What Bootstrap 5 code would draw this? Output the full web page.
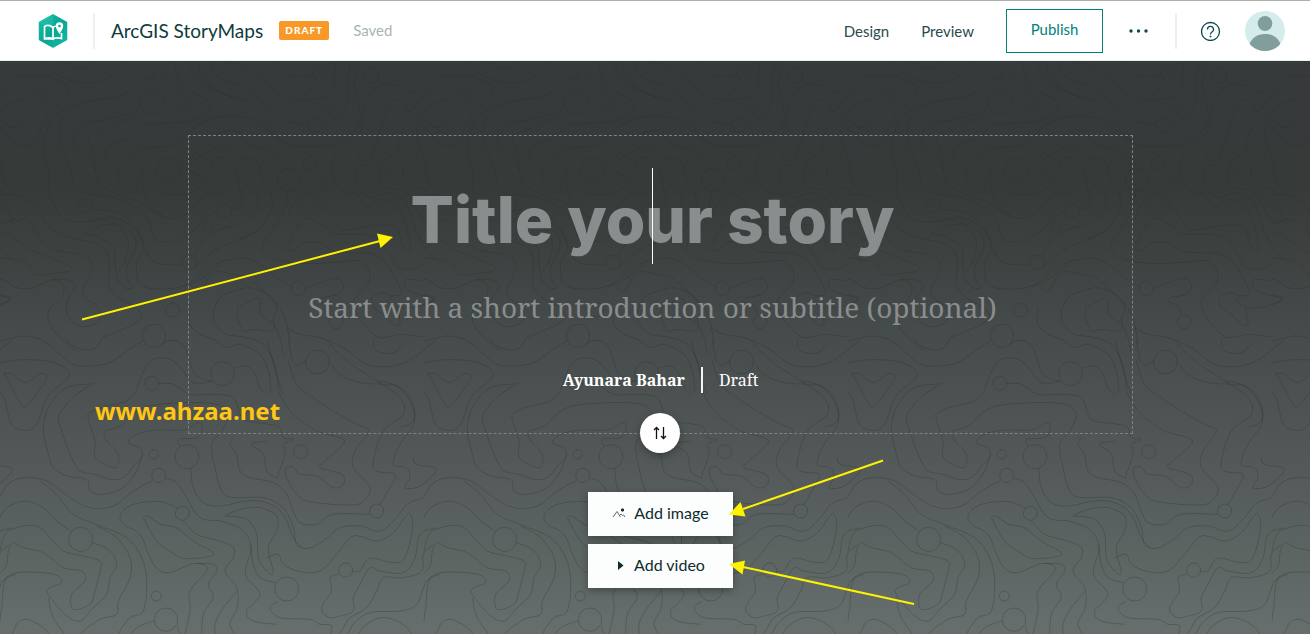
<!DOCTYPE html>
<html lang="en">
<head>
<meta charset="utf-8">
<meta name="viewport" content="width=device-width, initial-scale=1">
<title>ArcGIS StoryMaps</title>
<link href="https://cdn.jsdelivr.net/npm/bootstrap@5.3.0/dist/css/bootstrap.min.css" rel="stylesheet">
<style>
  body { font-family: Lato, "Open Sans", sans-serif; color: #0f3b3d; background: #666e6d; }
  .topbar { height: 61px; border-top: 1px solid #b0b0b0; border-bottom: 1px solid #e6f0ee; padding: 0 25px 0 37px; }
  .rule { width: 2px; height: 36px; background: #eaf1f0; }
  .brand { font-size: 19px; line-height: 24px; color: #0f3b3d; }
  .tag-draft { background: #f89927; color: #fff; font-size: 10px; line-height: 19px; font-weight: 900; letter-spacing: 1px; width: 50px; border-radius: 2px; }
  .saved { font-size: 15px; color: #a9b4b4; }
  .nav-text { font-size: 15px; color: #2b4a4c; text-decoration: none; padding-top: 2px; }
  .btn-publish { width: 97px; height: 44px; border: 1px solid #00827a; border-radius: 0; color: #00827a; font-size: 15px; padding: 0 0 2px; background: #fff; }
  .btn-plain { border: 0; padding: 0; background: none; line-height: 0; }
  .hero { min-height: calc(100vh - 61px); padding: 74px 0 46px 11px; background: linear-gradient(#363a3b 0%, #363a39 22%, #454a4a 46%, #545b5a 73%, #666f6d 100%); overflow: hidden; }
  .contours { inset: 0; width: 100%; height: 100%; }
  .notes { left: 0; top: 0; width: 100%; height: 100%; pointer-events: none; }
  .cover { width: 945px; max-width: 100%; border: 1px dashed #7d8382; padding: 32px 0 40px; }
  .field { background: none; border: 0; outline: 0; padding: 0; text-align: center; width: 100%; color: #fff; }
  .field::placeholder { color: #8a8d8d; opacity: 1; }
  .edit { padding-right: 16px; }
  .field-title { font-family: Inter, Lato, sans-serif; font-size: 64px; font-weight: 800; height: 96px; padding-top: 8px; }
  .caret { left: calc(50% - 9px); top: 0; width: 1px; height: 96px; background: #fff; }
  .field-sub { font-family: "Noto Serif", "DejaVu Serif", serif; font-size: 28px; height: 44px; margin-top: 21px; }
  .byline { font-family: "Noto Serif", "DejaVu Serif", serif; font-size: 16px; line-height: 26px; margin-top: 38px; color: #fff; gap: 16px; }
  .byline-rule { width: 2px; height: 26px; background: #f4f4f4; }
  .btn-swap { width: 40px; height: 40px; border-radius: 50%; background: #fff; border: 0; padding: 0; left: calc(50% - 21px); bottom: -20px; box-shadow: 0 3px 8px rgba(0,0,0,.3); }
  .btn-media { width: 145px; height: 44px; border: 0; border-radius: 0; background: #fcfefd; color: #0f2b2d; font-size: 16px; padding: 0 0 2px; box-shadow: 0 3px 8px rgba(0,0,0,.3); }
  .media { margin-top: 58px; }
  .watermark { left: 95px; top: 334px; font: 700 24px/32px "Noto Sans", sans-serif; color: #ffc714; }
</style>
</head>
<body>
<header class="topbar d-flex align-items-center bg-white">
  <svg width="32" height="34" viewBox="0 0 32 34" role="img" aria-label="StoryMaps">
    <defs><linearGradient id="lg" x1="0" y1="0" x2="1" y2="1"><stop offset="0" stop-color="#1abfa8"/><stop offset=".5" stop-color="#0aa594"/><stop offset="1" stop-color="#16b8a2"/></linearGradient></defs>
    <path d="M16 1 29.500 8.500V25.500L16 33 2.500 25.500V8.500Z" fill="url(#lg)" stroke="url(#lg)" stroke-width="1.500" stroke-linejoin="round"/>
    <path d="M2 8.500 16 1V11L8 12Z" fill="#2bcbb4" opacity=".35"/>
    <path d="M16 13.500C13 11 10 11 7.500 12.500V24.500C11 23.500 13.500 23.500 16 25ZM16 25c2.500-1.500 5-1.500 8.500-.5V19M16 13.500c1.500-1.200 2.500-1.500 3.500-1.500M16 25H7" fill="none" stroke="#fff" stroke-width="1.700"/>
    <path d="M22.500 20c-2.500-4-3.700-5.700-3.700-8a3.700 3.700 0 0 1 7.400 0c0 2.300-1.200 4-3.700 8Z" fill="#fff"/><circle cx="22.500" cy="12" r="1.300" fill="#0aa594"/>
  </svg>
  <span class="rule ms-4"></span>
  <span class="brand ms-3">ArcGIS StoryMaps</span>
  <span class="tag-draft ms-3 text-center">DRAFT</span>
  <span class="saved ms-4">Saved</span>
  <nav class="ms-auto d-flex align-items-center">
    <a class="nav-text" href="#">Design</a>
    <a class="nav-text mx-4 px-2" href="#">Preview</a>
    <button class="btn-publish" type="button">Publish</button>
    <button class="btn-plain ms-4" type="button" aria-label="More"><svg width="24" height="24" fill="#0f4a4c"><circle cx="4" cy="12" r="1.700"/><circle cx="11.500" cy="12" r="1.700"/><circle cx="19" cy="12" r="1.700"/></svg></button>
    <span class="rule ms-4"></span>
    <button class="btn-plain ms-4" type="button" aria-label="Help"><svg width="20" height="20" fill="none" stroke="#0f4a4c" stroke-width="1.300"><circle cx="9.500" cy="10.500" r="9"/><path d="M6.500 8.500a3 3 0 1 1 4.500 2.500C9.800 11.700 9.500 12.100 9.500 13.500"/><circle cx="9.500" cy="15.500" r=".7" fill="#0f4a4c" stroke-width=".5"/></svg></button>
    <button class="btn-plain ms-4" type="button" aria-label="Profile"><svg width="40" height="40"><defs><clipPath id="av"><circle cx="20" cy="20" r="20"/></clipPath></defs><g clip-path="url(#av)"><path fill="#d4eceb" d="M0 0h40v40H0z"/><ellipse cx="20" cy="12.500" rx="7.300" ry="7.500" fill="#819d9c"/><path d="M4.500 33C7 27 12 23 20 23s13 4 15.500 10v7h-31Z" fill="#819d9c"/></g></svg></button>
  </nav>
</header>

<main class="hero position-relative d-flex flex-column align-items-center">
  <svg class="contours position-absolute" aria-hidden="true">
    <defs>
      <pattern id="topo" width="1272" height="1740" patternUnits="userSpaceOnUse" patternTransform="scale(.33333)">
        <g id="topo-lines" fill="none" stroke="#262a26" stroke-opacity=".3" stroke-width="3"></g>
        <use href="#topo-lines" x="-1272"/><use href="#topo-lines" x="1272"/>
      </pattern>
    </defs>
    <rect width="100%" height="100%" fill="url(#topo)"/>
  </svg>

  <section class="cover position-relative">
    <div class="edit position-relative">
      <input class="field field-title" type="text" aria-label="Story title" placeholder="Title your story">
      <span class="caret position-absolute"></span>
    </div>
    <div class="edit"><input class="field field-sub" type="text" aria-label="Subtitle" placeholder="Start with a short introduction or subtitle (optional)"></div>
    <div class="byline d-flex justify-content-center align-items-center">
      <strong>Ayunara Bahar</strong><span class="byline-rule"></span><span>Draft</span>
    </div>
    <button class="btn-swap position-absolute d-flex align-items-center justify-content-center" type="button" aria-label="Swap layout"><svg width="14" height="14" fill="none" stroke="#111" stroke-width="1.300"><path d="M3.500 13V1.500M1 4l2.500-2.500L6 4M10.500 1v11.500M8 10l2.500 2.500L13 10"/></svg></button>
  </section>

  <div class="media position-relative d-flex flex-column gap-2">
    <button class="btn-media d-flex align-items-center justify-content-center gap-2" type="button"><svg width="14" height="12" fill="none" stroke="#59696a"><path d="M1 10 5 4.500 8.500 10M7.500 8.500l1.500-1.500 1.500 1.500 1-.5 1.500 2"/><circle cx="10.500" cy="3" r="1.200" fill="#0f2b2d" stroke="#0f2b2d"/></svg>Add image</button>
    <button class="btn-media d-flex align-items-center justify-content-center gap-2" type="button"><svg width="10" height="12"><path d="M2 2v9l5.500-4.500Z" fill="#0f2b2d"/></svg>Add video</button>
  </div>

  <div class="watermark position-absolute">www.ahzaa.net</div>
  <svg class="notes position-absolute" aria-hidden="true" fill="#fff200" stroke="#fff200" stroke-width="2">
    <path d="M82 258.500 380 180M883 399.500 743 448M914 543 743 506"/>
    <path stroke="none" d="M393 176 377 172.500 380.500 187ZM729 453.500 740.500 441 745.500 455.500ZM729 503 745 499.500 742.500 513.500Z"/>
  </svg>
</main>

<script src="https://cdn.jsdelivr.net/npm/bootstrap@5.3.0/dist/js/bootstrap.bundle.min.js"></script>
<script>
  // Contour lines: each row is a list of x,y points that a smooth curve passes through.
  const lines = `
128,0 155,30 210,58 270,65 325,50 370,10 382,-10
185,0 210,18 245,22 272,15 278,0
0,95 20,80 45,50 80,43 150,50 195,70 205,95 185,125 150,150 130,185 105,240 75,257 40,240 10,208 -10,200
-60,160 -40,125 -20,150 0,152 35,125 75,113 125,85 140,95 130,120 100,160 80,182 40,200 15,185 0,178
520,0 540,60 580,95 620,115 633,140 610,165 560,182 480,187 430,195 400,225 370,240 325,255 313,275 325,300 352,322 358,355 380,385 405,400 412,370 427,335 415,315 385,298 400,275 440,260 500,257 540,240 590,195 640,172 700,165 760,175 800,205 840,238 880,253 930,256 1000,250 1050,220 1078,185 1078,140 1062,80 1070,30 1080,0
565,0 585,45 630,80 690,105 750,125 790,165 820,215 860,245
590,0 610,50 650,90 700,110
628,0 640,35 680,60 740,85 790,125 840,170 880,185 923,187
968,186 1000,175 1030,150 1045,110 1045,50 1052,0
670,0 730,18 790,55 830,95 880,113 930,116 980,105 1000,80 1005,30 1010,0
815,0 850,35 890,45 938,44
975,24 987,15 990,0
462,47 425,60 390,90 340,110 270,120 200,155 178,215 185,265 210,320 220,370 240,395 300,403 360,415 410,440 445,480 460,525 490,542 540,535 590,500 620,465 655,450
275,119 210,135 155,180 130,260 145,330 150,400 180,460 220,482 280,480 340,470 400,500 430,550 455,597 500,611 547,608
423,140 390,170 340,195 275,218 265,240 280,275 287,330
423,135 380,160 320,175 250,190 220,220 230,260 270,290 287,330 300,370 350,400 410,420 450,445 500,470 550,465 590,430 620,395 660,400 683,380 665,345 640,320 645,290 690,300 710,330 715,370 730,420 720,440 696,444
490,45 520,65 550,100 565,130 558,147 530,135 505,117 491,115
560,400 500,400 475,380 445,362 428,385 440,410 470,450 500,470
565,305 590,270 640,225 690,208 720,215 730,240 760,255 810,270 850,320
570,330 605,350 608,370 580,390 560,400
570,305 610,280 660,255 690,265 720,290 760,295 780,315 785,350 815,400 812,450 780,505 720,535
710,340 745,375 773,410 765,455 720,485 650,510 610,540 582,588
865,390 850,450 820,500 790,550 800,580 850,600 930,608 1020,602 1080,600 1105,625 1108,660 1085,690 1060,720 1070,760 1100,800 1140,830 1200,820 1272,828
585,620 640,570 720,535 780,505
276,446 340,450 390,480 420,520 430,560 410,610 415,660 450,682 520,682 570,665 620,625 680,598 740,592 790,615 830,650 875,677
550,678 600,655 660,610
250,516 300,495 350,490 390,510 408,545 400,580 380,620 385,660 398,680 375,680 350,650 345,600 340,560 300,530 250,516
280,470 330,480 370,510 385,550 375,600 350,640
0,400 50,402 85,420 120,460 150,500 210,530 280,545 320,570 328,620 325,670 355,710 400,735 425,765 400,790 345,815 310,830 280,865 230,860 200,840
0,435 25,450 40,485 75,472 100,500 130,545 180,570 240,580 275,600 270,640 250,680 255,710 290,735 300,770 270,795 225,790 200,750 205,710 225,680 215,660 160,655 100,680 50,680 20,660 0,655
0,590 40,595 80,605 110,640 170,635 215,628 200,610 150,590 80,560 30,520 0,510
160,655 190,670 185,710 150,740 145,775 170,820 230,870
0,700 35,712 0,735
0,840 40,830 80,825 130,840 180,880 220,910 270,915 330,905 380,870 430,838
485,850 510,838 540,845 560,870 585,940 640,962
1272,70 1235,95 1200,75 1150,72 1115,95 1090,150 1080,210 1030,255 1000,300 1000,360 1035,395 1070,400 1100,440 1140,415 1180,430 1215,480 1230,550 1230,575 1205,550 1190,500 1130,492 1060,505 1020,500 975,440 945,405 910,400 880,430 865,470
1310,80 1280,110 1260,112 1230,150 1195,120 1165,130 1140,210 1115,283
1272,165 1250,180 1265,200 1290,190 1320,215
1240,160 1225,185 1205,215 1190,270 1150,300 1138,340 1155,380 1190,385 1225,400 1255,450 1272,480 1290,485 1320,470
1255,225 1260,260 1240,290 1210,320 1215,350 1250,375 1290,395
1280,180 1255,195 1252,240 1275,300 1280,350 1310,400
1070,315 1065,350 1085,390 1120,410 1170,395 1220,430 1245,500 1272,555 1310,600
860,565 880,520 910,475 940,475 975,500 1020,520 1080,520 1130,530 1170,580 1195,620 1240,625 1272,605
860,565 880,568 910,545 960,545 1000,570 1060,575 1120,580 1160,610 1190,660 1205,700 1180,705 1165,720 1190,740 1200,790 1180,790 1150,760 1120,740 1115,710 1150,695 1175,705
1272,660 1220,655 1215,675 1240,695 1300,712 1272,730 1240,740 1190,740
917,682 960,665 990,655 1020,655 1030,680 1015,700 970,710 960,720 990,735 1000,760
570,670 600,690 640,635 700,640 740,650 790,690 840,740 860,790 870,850
640,750 660,710 700,690 750,680 800,700 830,740 820,780 840,830 850,880
712,740 750,720 780,715 782,760 820,790 810,810 760,805 730,810 712,770 712,740
640,750 645,790 680,820 740,830 790,850 820,900 835,960 850,1000
570,740 570,790 600,820 640,835 680,860 720,850 780,880 805,930 812,980 800,1000 780,980 760,930 735,915 704,920
865,840 880,905 900,910 917,900
990,905 1020,940 1080,965 1150,970 1200,980 1240,1030 1240,1080 1200,1100
860,800 900,820 960,830 1030,860 1100,910 1180,915 1240,890 1310,835
1120,840 1130,870 1180,875 1220,840
0,905 70,896 150,902 200,925 205,950 170,980 140,1010 110,1090 75,1108 35,1090 15,1020 0,990
12,938 35,938 75,965 120,938 140,945 130,970 80,1035 60,1025 30,970 12,938
475,967 520,970 570,1000 640,1000 700,1010 720,1060 740,1080 810,1090 840,1100 850,1130 880,1135 850,1150 855,1180 835,1240 830,1250 800,1230 790,1180 755,1150 800,1140
410,990 380,1020 320,1035 270,1055 265,1075 285,1140 287,1190 345,1220 355,1180 320,1140 315,1110 360,1095 430,1040 550,1025 650,1030 685,1060 665,1110 635,1150 645,1220 665,1290 700,1310 790,1310 850,1340 880,1400 890,1450 925,1462 970,1440 1020,1400 1080,1395 1140,1410 1190,1370 1220,1330 1272,1310
410,985 450,900 520,900 580,965 633,960
285,965 230,1000 178,1060 185,1110 215,1190 240,1230 285,1240 330,1255 370,1250 400,1215 427,1185 420,1160 385,1145 410,1120 470,1107 550,1107 600,1085 605,1110 590,1130 535,1135 540,1155
275,968 200,980 150,1030 130,1100 145,1180 160,1220 200,1245 260,1255 270,1290 310,1300 370,1280 410,1230 427,1180
0,1305 30,1265 75,1250 140,1260 210,1310 270,1340 340,1335 400,1290 455,1260
498,1252 530,1265 560,1310 600,1370 670,1382 730,1410 755,1460 740,1510 740,1550 780,1600 740,1650 760,1680 830,1690
572,1222 580,1280 610,1325 660,1335 740,1320 800,1325 850,1360 880,1430 905,1460
700,1130 690,1150 710,1180 720,1230 750,1250 820,1265 860,1300 880,1350 900,1385 950,1390 1000,1360 1110,1360
855,1220 880,1218 900,1240 950,1245 1000,1280 1030,1270 1025,1240 960,1220 975,1200 1030,1150 1020,1130 950,1110 880,1060 840,1000 830,940 800,840
855,1220 860,1250 890,1300 930,1322 1060,1332 1100,1310 1108,1275 1060,1220 1065,1170 1105,1110 1070,1090 1000,1050 940,1010 890,970 865,900
1130,960 1190,975 1235,1030 1240,1090 1200,1150 1180,1210 1220,1220 1230,1250 1215,1280 1260,1275 1310,1225 1250,1210 1240,1190
980,840 1040,900 1130,960 1200,1010 1210,1060 1150,1110 1120,1200 1130,1230 1185,1240 1175,1270 1140,1330
120,1260 170,1300 220,1360 300,1395 380,1430 425,1490 440,1560 430,1650 390,1670 360,1710 350,1740
0,1370 20,1340 75,1320 130,1340 170,1380 215,1412
0,1470 15,1420 50,1400 110,1395 150,1430 190,1470 240,1483 300,1500 300,1530 285,1590 270,1630 220,1645 215,1600 255,1560 245,1530 190,1520 130,1475 70,1460 40,1445 25,1470 20,1510 0,1540
275,1443 330,1470 350,1510 330,1550 320,1600 280,1640 240,1680 195,1660 145,1600 150,1580 185,1565 175,1545 130,1535 50,1535 15,1560 5,1640 0,1680
290,1395 350,1430 390,1490 390,1550 355,1620 350,1660 300,1675 250,1710 230,1740
145,1610 160,1670 210,1740
30,1740 50,1690 80,1675 130,1700 160,1740
530,1340 480,1322 400,1330 362,1360 370,1390 420,1420 450,1490 480,1530 520,1532 570,1510 610,1510 620,1530 570,1590 570,1650 550,1740
430,1370 445,1365 480,1390 530,1400 580,1440 640,1475 620,1488 550,1492 510,1470 470,1440 430,1370
550,1380 590,1420 660,1440 700,1460 700,1490 675,1530 710,1580 712,1640 690,1690 720,1740
590,1508 640,1510 650,1530 625,1570 640,1610 610,1660 605,1740
675,1365 720,1345 780,1340 830,1365 830,1410 805,1460 820,1535 800,1530 775,1490 770,1420 740,1375 675,1365
800,1490 835,1480 850,1510 900,1532 960,1530 1010,1480 1060,1425 1130,1440 1180,1415 1225,1358 1238,1400 1215,1490 1180,1505 1110,1492 1080,1530 1058,1530
1310,1400 1260,1420 1245,1490 1210,1535 1140,1530 1110,1520 1080,1570 1060,1610 1060,1650 1020,1665 990,1670 965,1650 975,1620 995,1590 990,1550 1015,1540
1300,1450 1270,1480 1265,1530 1210,1550 1150,1550 1130,1590 1100,1640 1050,1670 1030,1700 1005,1740
1320,1540 1280,1560 1250,1630 1200,1650 1110,1655 1060,1690 1035,1740
1060,1740 1100,1690 1150,1670 1210,1690 1250,1740
835,1620 810,1640 840,1670 930,1675 960,1690 995,1695 985,1740
750,1450 760,1510 780,1550 825,1565
712,1590 670,1640 645,1690 650,1740
380,1740 410,1700 462,1680
532,1695 545,1740`;
  const circles = `476,44,14 455,122,36 958,37,21 1115,44,22 917,87,15 987,143,14 945,193,21 505,328,36 867,356,35 931,307,21 966,371,14 1093,293,21 1172,342,14 675,448,21 625,498,15 256,434,21 568,604,21 895,682,21 518,747,21 462,824,35 1008,782,21 668,938,36 455,967,21 952,903,36 461,1180,14 561,1187,36 902,1172,21 476,1243,21 547,1357,21 1130,1350,21 242,1435,36 1037,1527,21 860,1584,36 469,1605,15 498,1676,35`;
  // Catmull-Rom points turned into cubic segments
  const smooth = row => {
    const p = row.trim().split(' ').map(q => q.split(',').map(Number));
    let d = 'M' + p[0];
    for (let i = 0; i < p.length - 1; i++) {
      const a = p[i - 1] || p[i], b = p[i], c = p[i + 1], e = p[i + 2] || c;
      d += `C${b[0] + (c[0] - a[0]) / 6},${b[1] + (c[1] - a[1]) / 6} ${c[0] - (e[0] - b[0]) / 6},${c[1] - (e[1] - b[1]) / 6} ${c[0]},${c[1]}`;
    }
    return `<path d="${d}"/>`;
  };
  document.getElementById('topo-lines').innerHTML =
    lines.trim().split('\n').map(smooth).join('') +
    circles.split(' ').map(c => { const [x, y, r] = c.split(','); return `<circle cx="${x}" cy="${y}" r="${r}"/>`; }).join('');
</script>
</body>
</html>
